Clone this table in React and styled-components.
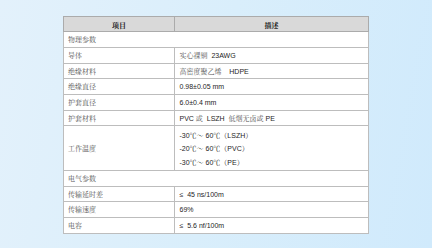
import React from "react";
import styled, { createGlobalStyle } from "styled-components";

const Global = createGlobalStyle`
  html, body { margin: 0; padding: 0; }
  body { font-family: "Liberation Sans", "Noto Sans CJK SC", sans-serif; }
`;

const Page = styled.div`
  width: 432px;
  height: 248px;
  box-sizing: border-box;
  padding-top: 16px;
  display: flex;
  align-items: flex-start;
  justify-content: center;
  background: linear-gradient(100deg, #e3f1fb 0%, #d9eefb 50%, #d0eafc 100%);
`;

const Table = styled.table`
  border-collapse: collapse;
  table-layout: fixed;
  width: 303px;
  background: #ffffff;
  border: 1px solid #b3b3b3;
  font-family: "Liberation Sans", "Noto Serif CJK SC", "Noto Sans CJK SC", sans-serif;
  font-size: 7px;
  color: #1e1e1e;
`;

const Th = styled.th`
  background: #d9d9d9;
  border: 1px solid #ababab;
  padding: 0;
  width: ${(p) => p.$w}px;
`;

const Td = styled.td`
  border: 1px solid #bdbdbd;
  padding: 0;
`;

const Cell = styled.div`
  box-sizing: border-box;
  height: ${(p) => p.$h}px;
  padding: 1.5px ${(p) => p.$pad}px 0;
  display: flex;
  flex-direction: column;
  justify-content: center;
  align-items: ${(p) => (p.$center ? "center" : "flex-start")};
  font-weight: ${(p) => (p.$bold ? "bold" : "normal")};
  color: ${(p) => (p.$bold ? "#222" : "inherit")};
`;

const Line = styled.div`
  white-space: pre;
  line-height: ${(p) => (p.$tall ? "13.3px" : "10px")};
`;

const Cjk = styled.span`
  color: #555;
`;

const rows = [
  { section: "物理参数" },
  { k: "导体", v: [[["实心裸铜", 1], ["  23AWG"]]] },
  { k: "绝缘材料", v: [[["高密度聚乙烯", 1], ["    HDPE"]]] },
  { k: "绝缘直径", v: [[["0.98±0.05 mm"]]] },
  { k: "护套直径", v: [[["6.0±0.4 mm"]]] },
  { k: "护套材料", v: [[["PVC "], ["或", 1], ["  LSZH  "], ["低烟无卤或", 1], [" PE"]]] },
  {
    k: "工作温度",
    v: [
      [["-30℃～ 60℃（LSZH）"]],
      [["-20℃～ 60℃（PVC）"]],
      [["-30℃～ 60℃（PE）"]],
    ],
  },
  { section: "电气参数" },
  { k: "传输延时差", v: [[["≤  45 ns/100m"]]] },
  { k: "传输速度", v: [[["69%"]]] },
  { k: "电容", v: [[["≤  5.6 nf/100m"]]] },
];

const ROW_H = 14.7;
const TALL_H = 43.6;

export default function App() {
  return (
    <Page>
      <Global />
      <Table>
        <thead>
          <tr>
            <Th $w={110}>
              <Cell $h={14.3} $pad={4} $center $bold>项目</Cell>
            </Th>
            <Th $w={193}>
              <Cell $h={14.3} $pad={4} $center $bold>描述</Cell>
            </Th>
          </tr>
        </thead>
        <tbody>
          {rows.map((r, i) =>
            r.section ? (
              <tr key={i}>
                <Td colSpan={2}>
                  <Cell $h={ROW_H} $pad={4}>
                    <Line><Cjk>{r.section}</Cjk></Line>
                  </Cell>
                </Td>
              </tr>
            ) : (
              <tr key={i}>
                <Td>
                  <Cell $h={r.v.length > 1 ? TALL_H : ROW_H} $pad={4}>
                    <Line><Cjk>{r.k}</Cjk></Line>
                  </Cell>
                </Td>
                <Td>
                  <Cell $h={r.v.length > 1 ? TALL_H : ROW_H} $pad={4.5}>
                    {r.v.map((parts, j) => (
                      <Line key={j} $tall={r.v.length > 1}>
                        {parts.map(([t, cjk], n) =>
                          cjk ? <Cjk key={n}>{t}</Cjk> : <span key={n}>{t}</span>
                        )}
                      </Line>
                    ))}
                  </Cell>
                </Td>
              </tr>
            )
          )}
        </tbody>
      </Table>
    </Page>
  );
}
